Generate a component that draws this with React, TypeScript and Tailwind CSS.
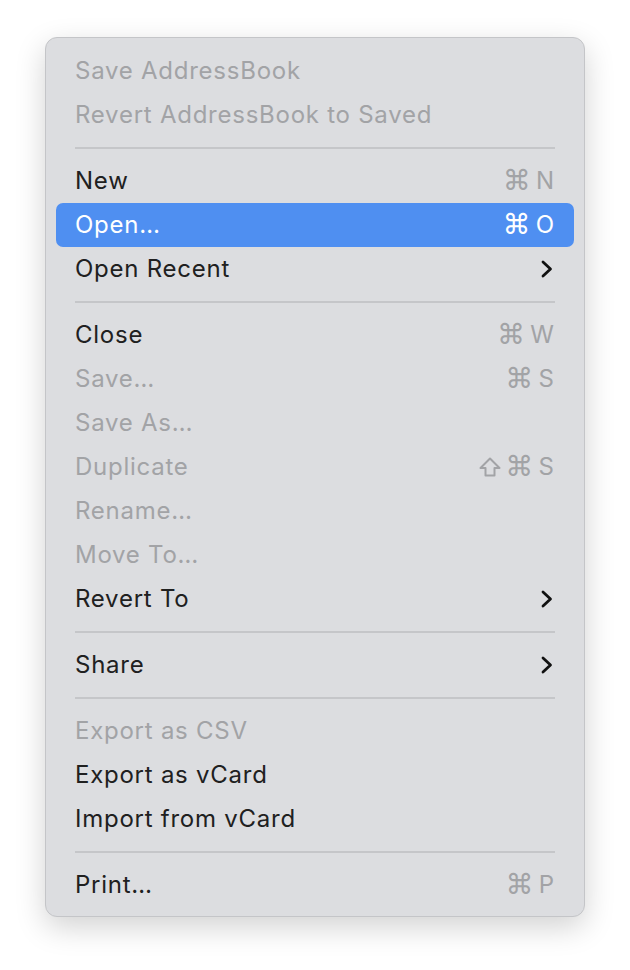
import React from 'react';

type Item =
  | { kind: 'sep' }
  | { kind: 'item'; label: string; disabled?: boolean; active?: boolean; shortcut?: string; shift?: boolean; submenu?: boolean };

const items: Item[] = [
  { kind: 'item', label: 'Save AddressBook', disabled: true },
  { kind: 'item', label: 'Revert AddressBook to Saved', disabled: true },
  { kind: 'sep' },
  { kind: 'item', label: 'New', shortcut: 'N' },
  { kind: 'item', label: 'Open…', shortcut: 'O', active: true },
  { kind: 'item', label: 'Open Recent', submenu: true },
  { kind: 'sep' },
  { kind: 'item', label: 'Close', shortcut: 'W' },
  { kind: 'item', label: 'Save…', shortcut: 'S', disabled: true },
  { kind: 'item', label: 'Save As…', disabled: true },
  { kind: 'item', label: 'Duplicate', shortcut: 'S', shift: true, disabled: true },
  { kind: 'item', label: 'Rename…', disabled: true },
  { kind: 'item', label: 'Move To…', disabled: true },
  { kind: 'item', label: 'Revert To', submenu: true },
  { kind: 'sep' },
  { kind: 'item', label: 'Share', submenu: true },
  { kind: 'sep' },
  { kind: 'item', label: 'Export as CSV', disabled: true },
  { kind: 'item', label: 'Export as vCard' },
  { kind: 'item', label: 'Import from vCard' },
  { kind: 'sep' },
  { kind: 'item', label: 'Print…', shortcut: 'P' },
];

const Chevron = () => (
  <svg width="12" height="18" viewBox="0 0 12 18" fill="none">
    <path d="M2 2l7.5 7-7.5 7" stroke="currentColor" strokeWidth="2.8" strokeLinecap="round" strokeLinejoin="round" />
  </svg>
);

const ShiftKey = () => (
  <svg width="22" height="20" viewBox="0 0 22 20" fill="none">
    <path d="M11 1.5L1.5 11h5v7.5h9V11h5z" stroke="currentColor" strokeWidth="2" strokeLinejoin="round" />
  </svg>
);

export default function App() {
  return (
    <div className="w-[630px] h-[970px] bg-white pt-[37px] pl-[45px] font-['Inter',sans-serif]">
      <div className="w-[540px] rounded-[12px] bg-[#dcdde0] border border-[#c4c5c8] shadow-[0_10px_30px_rgba(0,0,0,0.18)] pt-[11px] pb-[9px] px-[10px]">
        {items.map((it, i) =>
          it.kind === 'sep' ? (
            <div key={i} className="h-[22px] flex items-center px-[19px]">
              <div className="h-[2px] w-full bg-[#c5c6c9]" />
            </div>
          ) : (
            <div
              key={i}
              className={`h-[44px] flex items-center justify-between pl-[19px] pr-[20px] rounded-[7px] text-[24px] tracking-[0.75px] ${
                it.active ? 'bg-[#4f8ff1] text-white' : it.disabled ? 'text-[#a2a3a6]' : 'text-[#202020]'
              }`}
            >
              <span>{it.label}</span>
              {it.shortcut && (
                <span className={`flex items-center gap-[5px] tracking-normal ${it.active ? 'text-white' : 'text-[#a2a3a6]'}`}>
                  {it.shift && <ShiftKey />}
                  <span className="font-['DejaVu_Sans',sans-serif] text-[28px] leading-none">⌘</span>
                  <span>{it.shortcut}</span>
                </span>
              )}
              {it.submenu && (
                <span className="text-[#111] mr-[1px]">
                  <Chevron />
                </span>
              )}
            </div>
          )
        )}
      </div>
    </div>
  );
}
